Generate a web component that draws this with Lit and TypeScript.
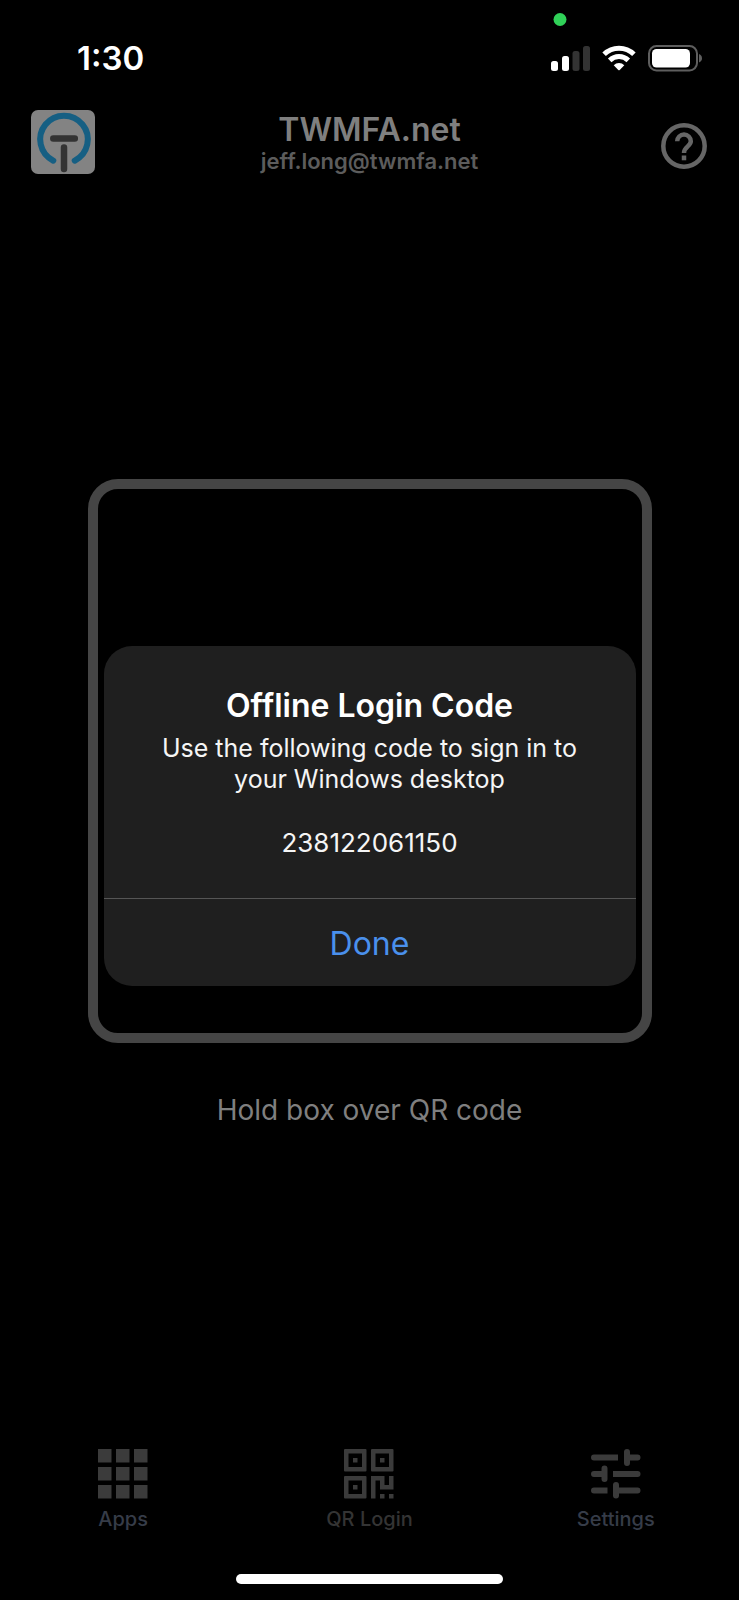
import { LitElement, html, css, svg } from "lit";
import { customElement, state } from "lit/decorators.js";

interface Tab {
  id: string;
  label: string;
  muted: boolean;
  icon: unknown;
}

const appsIcon = svg`
  <path d="M0 0h13.5v13.5H0zM18 0h13.5v13.5H18zM36 0h13.5v13.5H36zM0 18h13.5v13.5H0zM18 18h13.5v13.5H18zM36 18h13.5v13.5H36zM0 36h13.5v13.5H0zM18 36h13.5v13.5H18zM36 36h13.5v13.5H36z"/>`;

const qrIcon = svg`
  <path fill-rule="evenodd" d="M1 0h20.500q1 0 1 1v20.500q0 1-1 1h-20.500q-1 0-1-1v-20.500q0-1 1-1zM4.500 4.500v13.500h13.500v-13.500zM9 9h4.500v4.500h-4.500z"/>
  <path fill-rule="evenodd" d="M28 0h20.500q1 0 1 1v20.500q0 1-1 1h-20.500q-1 0-1-1v-20.500q0-1 1-1zM31.500 4.500v13.500h13.500v-13.500zM36 9h4.500v4.500h-4.500z"/>
  <path fill-rule="evenodd" d="M1 27h20.500q1 0 1 1v20.500q0 1-1 1h-20.500q-1 0-1-1v-20.500q0-1 1-1zM4.500 31.500v13.500h13.500v-13.500zM9 36h4.500v4.500h-4.500z"/>
  <path d="M27 27h13.500v9h4.500v-9h4.500v13.500h-13.500v-9h-4.500v18h-4.500zM36 45h4.500v4.500h-4.500zM45 45h4.500v4.500h-4.500z"/>`;

const settingsIcon = svg`
  <path d="M3 5.500h24v6h-24a3 3 0 0 1 0-6zM33 3a3 3 0 0 1 6 0v2.500h7.500a3 3 0 0 1 0 6h-7.500v2.500a3 3 0 0 1-6 0z"/>
  <path d="M3 22h7.500v-2.500a3 3 0 0 1 6 0v10.500a3 3 0 0 1-6 0v-2h-7.500a3 3 0 0 1 0-6zM22 22h24.500a3 3 0 0 1 0 6h-24.500z"/>
  <path d="M3 38.500h13.500v6h-13.500a3 3 0 0 1 0-6zM22 36a3 3 0 0 1 6 0v2.500h18.500a3 3 0 0 1 0 6h-18.500v2a3 3 0 0 1-6 0z"/>`;

@customElement("status-bar")
class StatusBar extends LitElement {
  static styles = css`
    :host {
      display: flex;
      align-items: flex-end;
      justify-content: space-between;
      height: 80px;
      padding: 0 37px 0 77px;
      box-sizing: border-box;
      color: #fff;
    }
    .time {
      font-size: 33px;
      line-height: 44px;
      font-weight: 600;
    }
    .icons {
      display: block;
    }
  `;

  render() {
    return html`
      <span class="time">1:30</span>
      <svg class="icons" width="152" height="70" viewBox="550 10 152 70" fill="#fff" aria-hidden="true">
        <circle cx="560" cy="19.500" r="6.500" fill="#30d158" />
        <rect x="551" y="61" width="7" height="10" rx="2.500" />
        <rect x="562" y="56" width="7" height="15" rx="2.500" />
        <rect x="572.500" y="51" width="7" height="20" rx="2.500" fill="#333" />
        <rect x="583" y="46" width="7" height="25" rx="2.500" fill="#333" />
        <g fill="none" stroke="#fff" stroke-width="5">
          <path d="M604.100 54.300a21.300 21.300 0 0 1 29.800 0" />
          <path d="M609.700 60.400a13.300 13.300 0 0 1 18.600 0" />
        </g>
        <path d="M613.700 65.200a7.600 7.600 0 0 1 10.600 0l-4.600 4.700q-.7.700-1.400 0z" />
        <rect x="649" y="46" width="48" height="24.500" rx="7.500" fill="none" stroke="#5e5e5e" stroke-width="2" />
        <rect x="652" y="49" width="38" height="18.500" rx="4.500" />
        <path d="M699 54v8.500q3-1.200 3-4.250t-3-4.250z" fill="#5e5e5e" />
      </svg>
    `;
  }
}

@customElement("account-header")
class AccountHeader extends LitElement {
  static styles = css`
    :host {
      display: grid;
      grid-template-columns: 64px 1fr 64px;
      padding: 30px 31px 0;
      align-items: center;
    }
    .logo {
      display: block;
    }
    .account {
      padding-top: 2px;
      text-align: center;
    }
    .name {
      margin: 0;
      font-size: 32px;
      line-height: 36px;
      font-weight: 600;
      color: #7f7f7f;
    }
    .mail {
      margin: 0;
      font-size: 22px;
      line-height: 26px;
      font-weight: 600;
      color: #5c5c5c;
    }
    .help {
      justify-self: end;
      padding: 8px 0 0;
      border: 0;
      background: none;
      color: #666;
      cursor: pointer;
    }
    .help svg {
      display: block;
    }
  `;

  render() {
    return html`
      <svg class="logo" width="64" height="64" viewBox="0 0 64 64" role="img" aria-label="TWMFA">
        <rect width="64" height="64" rx="7" fill="#838383" />
        <path d="M22.300 50.700A23.800 23.800 0 1 1 43.700 50.700" fill="none" stroke="#165f83" stroke-width="6" stroke-linecap="round" />
        <path d="M22.300 28.500h21.500M33 37.500v21.500" stroke="#333" stroke-width="6.500" stroke-linecap="round" />
      </svg>
      <div class="account">
        <h1 class="name">TWMFA.net</h1>
        <p class="mail">jeff.long@twmfa.net</p>
      </div>
      <button class="help" type="button" aria-label="Help">
        <svg width="48" height="48" viewBox="0 0 48 48" fill="none" stroke="currentColor" stroke-width="4.500">
          <circle cx="24" cy="24" r="20.700" />
          <path d="M17.200 19.300a6.800 6.800 0 0 1 13.600 0c0 5-6.800 5.300-6.800 11.700" />
          <path d="M24 33.500v4.800" />
        </svg>
      </button>
    `;
  }
}

@customElement("login-dialog")
class LoginDialog extends LitElement {
  static styles = css`
    :host {
      position: absolute;
      inset: 0;
      display: flex;
      align-items: center;
      justify-content: center;
      padding-top: 32px;
    }
    .dialog {
      width: calc(100% - 207px);
      border-radius: 28px;
      overflow: hidden;
      background: #1f1f1f;
      color: #f5f5f5;
      text-align: center;
    }
    .content {
      padding: 40px;
    }
    .title {
      margin: 0;
      font-size: 32px;
      line-height: 40px;
      font-weight: 600;
      color: #fff;
    }
    .text {
      margin: 7px 0 32px;
      font-size: 25px;
      line-height: 31px;
    }
    .code {
      margin: 0;
      font-size: 26px;
      line-height: 31px;
    }
    .done {
      display: block;
      width: 100%;
      height: 88px;
      padding: 2px 0 0;
      border: 0;
      border-top: 1px solid #555;
      background: none;
      font: inherit;
      font-size: 32px;
      color: #4a90ec;
      cursor: pointer;
    }
  `;

  render() {
    return html`
      <section class="dialog" role="alertdialog" aria-labelledby="title" aria-describedby="text">
        <div class="content">
          <h2 class="title" id="title">Offline Login Code</h2>
          <p class="text" id="text">Use the following code to sign in to your Windows desktop</p>
          <p class="code">238122061150</p>
        </div>
        <button class="done" type="button" @click=${() => this.dispatchEvent(new CustomEvent("done"))}>Done</button>
      </section>
    `;
  }
}

@customElement("tab-bar")
class TabBar extends LitElement {
  static styles = css`
    .tabs {
      display: grid;
      grid-template-columns: repeat(3, 1fr);
    }
    .tab {
      display: flex;
      flex-direction: column;
      align-items: center;
      gap: 6px;
      font-size: 20px;
      line-height: 28px;
      font-weight: 500;
      color: #363c48;
      text-decoration: none;
    }
    .muted {
      color: #343434;
    }
    .icon {
      display: block;
      fill: #3b3b3b;
    }
  `;

  private tabs: Tab[] = [
    { id: "apps", label: "Apps", muted: false, icon: appsIcon },
    { id: "qr", label: "QR Login", muted: true, icon: qrIcon },
    { id: "settings", label: "Settings", muted: false, icon: settingsIcon },
  ];

  render() {
    return html`
      <nav class="tabs" aria-label="Main">
        ${this.tabs.map(
          (tab) => html`
            <a class="tab ${tab.muted ? "muted" : ""}" href="#${tab.id}">
              <svg class="icon" width="50" height="50" viewBox="0 0 50 50" aria-hidden="true">${tab.icon}</svg>
              ${tab.label}
            </a>
          `,
        )}
      </nav>
    `;
  }
}

@customElement("app-root")
class AppRoot extends LitElement {
  static styles = css`
    :host {
      position: relative;
      display: flex;
      flex-direction: column;
      min-height: 100vh;
      box-sizing: border-box;
      padding-bottom: 16px;
      background: #000;
      font-family: Inter, "Liberation Sans", sans-serif;
    }
    .scanner {
      flex: 1;
      display: flex;
      flex-direction: column;
      align-items: center;
      justify-content: center;
      gap: 47px;
      padding-bottom: 14px;
    }
    .frame {
      width: calc(100% - 175px);
      aspect-ratio: 1;
      box-sizing: border-box;
      border: 10px solid #454545;
      border-radius: 30px;
    }
    .hint {
      margin: 0;
      font-size: 28px;
      line-height: 40px;
      color: #7f7f7f;
    }
    .home {
      width: 36%;
      height: 10px;
      margin: 41px auto 0;
      border-radius: 5px;
      background: #fff;
    }
  `;

  @state() private open = true;

  render() {
    return html`
      <status-bar></status-bar>
      <account-header></account-header>
      <main class="scanner">
        <div class="frame"></div>
        <p class="hint">Hold box over QR code</p>
      </main>
      <tab-bar></tab-bar>
      <div class="home"></div>
      ${this.open ? html`<login-dialog @done=${() => (this.open = false)}></login-dialog>` : null}
    `;
  }
}
